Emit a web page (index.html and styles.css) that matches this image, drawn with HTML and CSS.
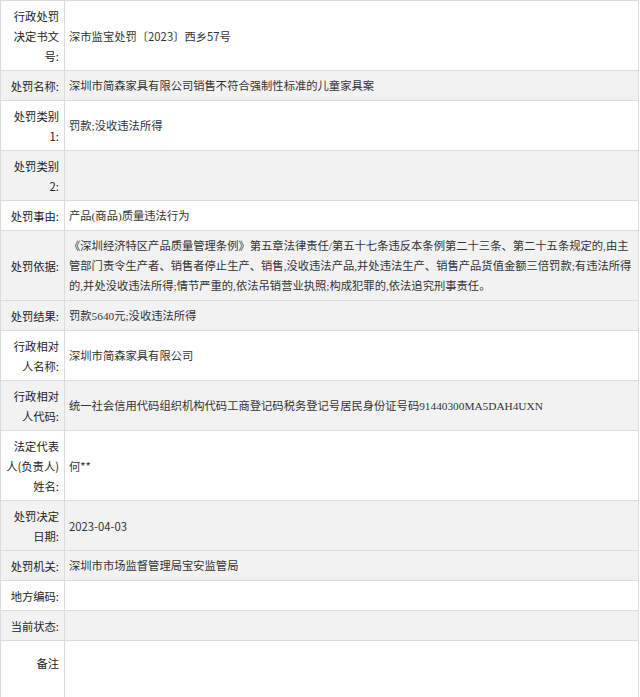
FILE: index.html
```html
<!DOCTYPE html>
<html lang="zh-CN">
<head>
    <meta charset="UTF-8">
    <meta name="viewport" content="width=device-width, initial-scale=1.0">
    <title>行政处罚信息</title>
    <link rel="stylesheet" href="styles.css">
</head>
<body>
    <div class="penalty-table">
        <div class="row">
            <div class="label">行政处罚决定书文号:</div>
            <div class="value sans">深市监宝处罚〔2023〕西乡57号</div>
        </div>
        <div class="row gray">
            <div class="label">处罚名称:</div>
            <div class="value">深圳市简森家具有限公司销售不符合强制性标准的儿童家具案</div>
        </div>
        <div class="row">
            <div class="label">处罚类别1:</div>
            <div class="value">罚款;没收违法所得</div>
        </div>
        <div class="row gray">
            <div class="label">处罚类别2:</div>
            <div class="value"></div>
        </div>
        <div class="row">
            <div class="label">处罚事由:</div>
            <div class="value">产品(商品)质量违法行为</div>
        </div>
        <div class="row gray">
            <div class="label">处罚依据:</div>
            <div class="value">《深圳经济特区产品质量管理条例》第五章法律责任/第五十七条违反本条例第二十三条、第二十五条规定的,由主管部门责令生产者、销售者停止生产、销售,没收违法产品,并处违法生产、销售产品货值金额三倍罚款;有违法所得的,并处没收违法所得;情节严重的,依法吊销营业执照;构成犯罪的,依法追究刑事责任。</div>
        </div>
        <div class="row gray">
            <div class="label">处罚结果:</div>
            <div class="value">罚款5640元;没收违法所得</div>
        </div>
        <div class="row">
            <div class="label">行政相对人名称:</div>
            <div class="value">深圳市简森家具有限公司</div>
        </div>
        <div class="row gray">
            <div class="label">行政相对人代码:</div>
            <div class="value">统一社会信用代码组织机构代码工商登记码税务登记号居民身份证号码91440300MA5DAH4UXN</div>
        </div>
        <div class="row">
            <div class="label">法定代表人(负责人)姓名:</div>
            <div class="value sans">何**</div>
        </div>
        <div class="row gray">
            <div class="label">处罚决定日期:</div>
            <div class="value sans">2023-04-03</div>
        </div>
        <div class="row gray">
            <div class="label">处罚机关:</div>
            <div class="value">深圳市市场监督管理局宝安监管局</div>
        </div>
        <div class="row">
            <div class="label">地方编码:</div>
            <div class="value"></div>
        </div>
        <div class="row gray">
            <div class="label">当前状态:</div>
            <div class="value"></div>
        </div>
        <div class="row note">
            <div class="label">备注</div>
            <div class="value"></div>
        </div>
    </div>
</body>
</html>
```

FILE: styles.css
```css
body {
    margin: 0;
    padding: 0;
    background-color: #ffffff;
    font-family: "Noto Sans CJK SC", sans-serif;
    font-size: 11.3px;
}
.penalty-table {
    width: 639px;
    box-sizing: border-box;
    border: 1px solid #dcdcdc;
    border-bottom: none;
}
.row {
    display: grid;
    grid-template-columns: 64px 1fr;
    border-bottom: 1px solid #dcdcdc;
    background-color: #ffffff;
}
.row.gray {
    background-color: #f2f2f2;
}
.label {
    box-sizing: border-box;
    display: flex;
    align-items: center;
    justify-content: flex-end;
    padding: 5px 5px 4px 5px;
    border-right: 1px solid #dcdcdc;
    text-align: right;
    line-height: 20px;
    color: #222222;
}
.value {
    display: flex;
    align-items: center;
    padding: 5px 4px 4px 4px;
    line-height: 20px;
    font-family: "Liberation Serif", "Noto Sans CJK SC", serif;
    color: #333333;
}
.value.sans {
    font-family: "Noto Sans CJK SC", sans-serif;
}
.row.note {
    height: 56px;
}
.row.note .label {
    align-items: flex-start;
    padding-top: 12px;
}
```
